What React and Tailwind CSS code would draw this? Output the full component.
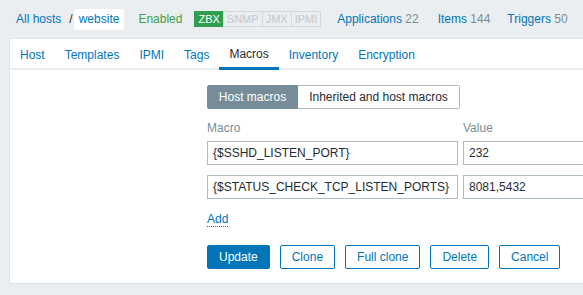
import React from "react";

const tabs = ["Host", "Templates", "IPMI", "Tags", "Macros", "Inventory", "Encryption"];

const Badge = ({ label, on }) => (
  <span
    className={
      on
        ? "h-[16px] px-[3px] flex items-center bg-[#2f9f4f] border border-[#2f9f4f] text-white"
        : "h-[16px] px-[3px] flex items-center bg-[#ebeef0] border border-[#d5d9dc] text-[#c2c8cc] -ml-px"
    }
  >
    {label}
  </span>
);

const Input = ({ value, w }) => (
  <div className={`${w} h-[24px] border border-[#acbbc2] bg-white px-[5px] flex items-center text-[12px] text-[#1f2c33] shrink-0`}>
    {value}
  </div>
);

const Btn = ({ label, primary }) => (
  <button
    className={
      primary
        ? "h-[24px] px-[11px] rounded-[2px] bg-[#0275b8] border border-[#0275b8] text-white text-[12px]"
        : "h-[24px] px-[11px] rounded-[2px] bg-white border border-[#0275b8] text-[#0275b8] text-[12px]"
    }
  >
    {label}
  </button>
);

export default function App() {
  return (
    <div
      className="w-[583px] h-[295px] bg-[#ebeef0] overflow-hidden text-[12px] text-[#1f2c33]"
      style={{ fontFamily: '"Liberation Sans", Arial, sans-serif' }}
    >
      {/* host navigation */}
      <div className="h-[38px] flex items-center pl-[16px] whitespace-nowrap">
        <a className="text-[#0275b8]">All hosts</a>
        <span className="ml-[8px] text-[#1f2c33]">/</span>
        <span className="ml-[1px] h-[21px] px-[5px] flex items-center bg-white text-[#0275b8] rounded-[2px]">website</span>
        <span className="ml-[14px] text-[#429e47]">Enabled</span>
        <div className="ml-[12px] flex items-center text-[11px]">
          <Badge label="ZBX" on />
          <Badge label="SNMP" />
          <Badge label="JMX" />
          <Badge label="IPMI" />
        </div>
        <a className="ml-[16px] text-[#0275b8]">
          Applications <span className="text-[#768d99]">22</span>
        </a>
        <a className="ml-[19px] text-[#0275b8]">
          Items <span className="text-[#768d99]">144</span>
        </a>
        <a className="ml-[17px] text-[#0275b8]">
          Triggers <span className="text-[#768d99]">50</span>
        </a>
      </div>

      {/* form panel */}
      <div className="ml-[9px] w-[620px] h-[246px] bg-white border border-[#dfe4e7]">
        <div className="h-[31px] flex border-b-2 border-[#ebeef0]">
          {tabs.map((t) => (
            <div
              key={t}
              className={
                t === "Macros"
                  ? "px-[10px] h-[31px] flex items-center text-[#1f2c33] border-b-[3px] border-[#0275b8] -mb-[2px] pt-[2px]"
                  : "px-[10px] h-[31px] flex items-center text-[#0275b8]"
              }
            >
              {t}
            </div>
          ))}
        </div>

        <div className="pl-[197px] pt-[15px]">
          <div className="flex h-[24px]">
            <div className="w-[91px] flex items-center justify-center bg-[#768d99] text-white rounded-l-[2px] border border-[#768d99]">
              Host macros
            </div>
            <div className="w-[162px] flex items-center justify-center bg-white border border-[#acbbc2] border-l-0 rounded-r-[2px]">
              Inherited and host macros
            </div>
          </div>

          <div className="mt-[11px] flex text-[#768d99] h-[15px] items-center">
            <span className="w-[256px]">Macro</span>
            <span>Value</span>
          </div>

          <div className="mt-[6px] flex gap-[5px]">
            <Input w="w-[251px]" value="{$SSHD_LISTEN_PORT}" />
            <Input w="w-[140px]" value="232" />
          </div>
          <div className="mt-[10px] flex gap-[5px]">
            <Input w="w-[251px]" value="{$STATUS_CHECK_TCP_LISTEN_PORTS}" />
            <Input w="w-[140px]" value="8081,5432" />
          </div>

          <div className="mt-[11px] h-[16px]">
            <a className="text-[#0275b8] border-b border-dotted border-[#0275b8]">Add</a>
          </div>

          <div className="mt-[19px] flex gap-[10px]">
            <Btn label="Update" primary />
            <Btn label="Clone" />
            <Btn label="Full clone" />
            <Btn label="Delete" />
            <Btn label="Cancel" />
          </div>
        </div>
      </div>
    </div>
  );
}
